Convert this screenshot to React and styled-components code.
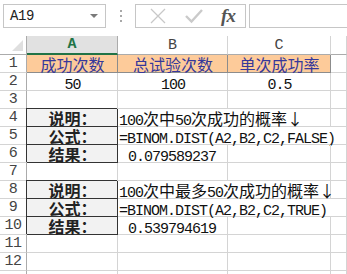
import React from "react";
import styled, { createGlobalStyle, css } from "styled-components";

const GlobalStyle = createGlobalStyle`
  html, body {
    margin: 0;
    padding: 0;
    background: #fff;
    overflow: hidden;
  }
  body {
    font-family: "Noto Sans CJK SC", sans-serif;
  }
`;

const Page = styled.div`
  width: 347px;
  height: 274px;
  overflow: hidden;
  display: flex;
  flex-direction: column;
`;

const FormulaBar = styled.div`
  display: flex;
  align-items: center;
  height: 24px;
  padding: 4px 0 8px 3px;
`;

const NameBox = styled.div`
  box-sizing: border-box;
  width: 103px;
  height: 24px;
  border: 1px solid #c6c6c6;
  display: flex;
  align-items: center;
  justify-content: space-between;
  padding: 0 7px 0 6px;
  font-family: "Liberation Mono", monospace;
  font-size: 14px;
  letter-spacing: -0.4px;
  color: #222;
`;

const DropArrow = styled.span`
  width: 0;
  height: 0;
  border-left: 4px solid transparent;
  border-right: 4px solid transparent;
  border-top: 4px solid #7a7a7a;
`;

const Grip = styled.div`
  width: 29px;
  display: flex;
  justify-content: center;
`;

const ActionBox = styled.div`
  box-sizing: border-box;
  width: 111px;
  height: 24px;
  border: 1px solid #c6c6c6;
  display: flex;
  align-items: center;
  padding-left: 9px;
`;

const IconSlot = styled.div`
  width: ${({ w }) => w}px;
  display: flex;
  align-items: center;
  justify-content: center;
`;

const Fx = styled.span`
  font-family: "Liberation Serif", serif;
  font-style: italic;
  font-weight: 700;
  font-size: 19px;
  color: #555;
  letter-spacing: -1px;
  line-height: 20px;
`;

const FormulaInput = styled.div`
  box-sizing: border-box;
  flex: 1;
  height: 24px;
  margin-left: 3px;
  border: 1px solid #c6c6c6;
  border-right: none;
`;

const Sheet = styled.div`
  display: grid;
  grid-template-columns: 27px 91px 110px 103px 1fr;
  grid-template-rows: 19px repeat(13, 18px);
`;

const Corner = styled.div`
  position: relative;
  box-sizing: border-box;
  border-right: 1px solid #ababab;
  border-bottom: 1px solid #ababab;
  &::after {
    content: "";
    position: absolute;
    right: 3px;
    bottom: 3px;
    width: 0;
    height: 0;
    border-left: 11px solid transparent;
    border-bottom: 11px solid #dfdfdf;
  }
`;

const ColHead = styled.div`
  box-sizing: border-box;
  display: flex;
  align-items: center;
  justify-content: center;
  font-family: "Liberation Mono", monospace;
  font-size: 15px;
  color: #444;
  border-right: 1px solid #d4d4d4;
  border-bottom: 1px solid #ababab;
  ${({ selected }) =>
    selected &&
    css`
      background: #e1e1e1;
      color: #217346;
      font-weight: 700;
      border-right-color: #ababab;
      border-bottom: 2px solid #217346;
    `}
`;

const RowHead = styled.div`
  box-sizing: border-box;
  display: flex;
  align-items: center;
  justify-content: center;
  font-family: "Liberation Mono", monospace;
  font-size: 15px;
  letter-spacing: -0.5px;
  color: #444;
  border-right: 1px solid #ababab;
  border-bottom: 1px solid #d4d4d4;
`;

const Cell = styled.div`
  box-sizing: border-box;
  display: flex;
  align-items: center;
  justify-content: ${({ align }) =>
    align === "center" ? "center" : "flex-start"};
  padding-left: ${({ indent }) => indent || 1}px;
  grid-column: span ${({ span }) => span || 1};
  color: #111;
  white-space: nowrap;
  border-right: 1px solid #d4d4d4;
  border-bottom: 1px solid #d4d4d4;
  ${({ kind }) =>
    kind === "title" &&
    css`
      background: #fdcb9a;
      color: #36389a;
      border-right-color: #8c8c8c;
      border-bottom-color: #8c8c8c;
    `}
  ${({ kind }) =>
    kind === "label" &&
    css`
      background: #f2f2f2;
      font-weight: 700;
      color: #222;
      border-right-color: #333;
      border-bottom-color: #333;
      box-shadow: -1px -1px 0 0 #333;
    `}
`;

const Text = styled.span`
  display: inline-block;
  height: 16px;
  font-size: 16px;
  line-height: 16px;
`;

const Latin = styled.span`
  font-family: "Liberation Mono", monospace;
  font-size: 15px;
  letter-spacing: -1px;
  font-weight: 400;
`;

const renderText = (text) =>
  (text || "")
    .split(/([\x20-\x7e]+)/)
    .filter(Boolean)
    .map((part, i) =>
      /^[\x20-\x7e]+$/.test(part) ? <Latin key={i}>{part}</Latin> : part
    );

const empty = [{}, {}, {}, {}];

const rows = [
  [
    { t: "成功次数", kind: "title", align: "center" },
    { t: "总试验次数", kind: "title", align: "center" },
    { t: "单次成功率", kind: "title", align: "center" },
    {}
  ],
  [
    { t: "50", align: "center" },
    { t: "100", align: "center" },
    { t: "0.5", align: "center" },
    {}
  ],
  empty,
  [
    { t: "说明：", kind: "label", align: "center" },
    { t: "100次中50次成功的概率↓", span: 2 },
    {}
  ],
  [
    { t: "公式：", kind: "label", align: "center" },
    { t: "=BINOM.DIST(A2,B2,C2,FALSE)", span: 3 }
  ],
  [
    { t: "结果：", kind: "label", align: "center" },
    { t: "0.079589237", indent: 10 },
    {},
    {}
  ],
  empty,
  [
    { t: "说明：", kind: "label", align: "center" },
    { t: "100次中最多50次成功的概率↓", span: 2 },
    {}
  ],
  [
    { t: "公式：", kind: "label", align: "center" },
    { t: "=BINOM.DIST(A2,B2,C2,TRUE)", span: 3 }
  ],
  [
    { t: "结果：", kind: "label", align: "center" },
    { t: "0.539794619", indent: 10 },
    {},
    {}
  ],
  empty,
  empty,
  empty
];

// the 13th row only peeks in under the bottom edge, its number is not visible
const VISIBLE_ROWS = 12;

const CloseIcon = () => (
  <svg width="20" height="20" viewBox="0 0 20 20">
    <path d="M3 3 L17 17 M17 3 L3 17" stroke="#c8c8c8" strokeWidth="1.3" fill="none" />
  </svg>
);

const CheckIcon = () => (
  <svg width="20" height="20" viewBox="0 0 20 20">
    <path d="M2 10 L7.5 15.5 L18 4" stroke="#cacaca" strokeWidth="2.4" fill="none" />
  </svg>
);

const GripIcon = () => (
  <svg width="4" height="14" viewBox="0 0 4 14">
    <rect x="1" y="1" width="2" height="2" fill="#a8a8a8" />
    <rect x="1" y="6" width="2" height="2" fill="#a8a8a8" />
    <rect x="1" y="11" width="2" height="2" fill="#a8a8a8" />
  </svg>
);

const App = () => (
  <Page>
    <GlobalStyle />
    <FormulaBar>
      <NameBox>
        <span>A19</span>
        <DropArrow />
      </NameBox>
      <Grip>
        <GripIcon />
      </Grip>
      <ActionBox>
        <IconSlot w={26}>
          <CloseIcon />
        </IconSlot>
        <IconSlot w={46}>
          <CheckIcon />
        </IconSlot>
        <IconSlot w={22}>
          <Fx>fx</Fx>
        </IconSlot>
      </ActionBox>
      <FormulaInput />
    </FormulaBar>
    <Sheet>
      <Corner />
      <ColHead selected>A</ColHead>
      <ColHead>B</ColHead>
      <ColHead>C</ColHead>
      <ColHead />
      {rows.map((cells, r) => (
        <React.Fragment key={r}>
          <RowHead>{r < VISIBLE_ROWS ? r + 1 : ""}</RowHead>
          {cells.map((c, i) => (
            <Cell
              key={i}
              kind={c.kind}
              align={c.align}
              span={c.span}
              indent={c.indent}
            >
              {c.t && <Text>{renderText(c.t)}</Text>}
            </Cell>
          ))}
        </React.Fragment>
      ))}
    </Sheet>
  </Page>
);

export default App;
